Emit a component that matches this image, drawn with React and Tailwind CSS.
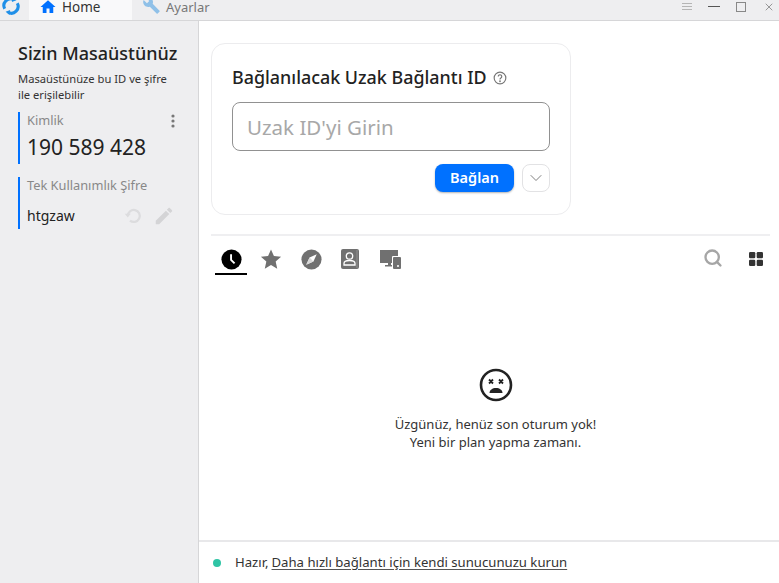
import { X, ChevronDown, Search } from "lucide-react";

function Logo() {
  return (
    <svg width="18" height="18" viewBox="0 0 20 20" fill="none">
      <path d="M3 13A7.500 7.500 0 0 1 13 2.800" stroke="#1f8fe8" strokeWidth="3.400" />
      <path d="M17 7A7.500 7.500 0 0 1 7 17.200" stroke="#1f8fe8" strokeWidth="3.400" />
      <path d="M11.500 0l4.500 3.600-5 1.900z" fill="#1f8fe8" />
      <path d="M8.500 20L4 16.400l5-1.900z" fill="#1f8fe8" />
    </svg>
  );
}

function Wrench() {
  return (
    <svg width="18" height="18" viewBox="0 0 24 24" fill="#8fc0e8">
      <path d="M22 19.200l-9.100-9.100c.9-2.300.4-5-1.500-6.900C9.400 1.200 6.400.8 4 1.900l4.300 4.300-3 3L.9 5C-.3 7.400.2 10.400 2.200 12.400c1.900 1.900 4.600 2.400 6.900 1.500l9.100 9.100c.4.400 1 .4 1.400 0l2.300-2.300c.5-.4.500-1.100.1-1.500z" transform="translate(0 -1)" />
    </svg>
  );
}

function TitleBar() {
  return (
    <div className="flex h-[21px] border-b border-[#d6d6d8] bg-[#eeeef0]">
      <div className="w-[29px] overflow-hidden pl-[2px]">
        <div className="-mt-[3px]"><Logo /></div>
      </div>
      <div className="flex w-[103px] items-start bg-[#f9f9fa] pl-[10px]">
        <div className="-mt-[2px]">
          <svg width="18" height="18" viewBox="0 0 24 24" fill="#0071ff">
            <path d="M10 20v-6h4v6h5v-8h3L12 3 2 12h3v8z" />
          </svg>
        </div>
        <span className="ml-[5px] text-[13.500px] leading-[14px] text-[#333]">Home</span>
      </div>
      <div className="flex items-start pl-[11px]">
        <div className="-mt-[3px]"><Wrench /></div>
        <span className="ml-[5px] text-[13px] leading-[14px] text-[#777]">Ayarlar</span>
      </div>
      <div className="ml-auto flex items-center pb-[7px] pr-[4px]">
        <svg width="10" height="9" viewBox="0 0 10 9" stroke="#b5b5b5" strokeWidth="1">
          <path d="M0 1.500h10M0 4.500h10M0 7.500h10" />
        </svg>
        <div className="ml-[16px] h-[1px] w-[12px] bg-[#555]" />
        <div className="ml-[16px] h-[10px] w-[10px] border border-[#888]" />
        <X size={12} className="ml-[17px]" strokeWidth={1.3} color="#666" />
      </div>
    </div>
  );
}

function Sidebar() {
  return (
    <div className="w-[199px] shrink-0 border-r border-[#d6d6d8] bg-[#eeeef0] pl-[18px] pr-[25px] pt-[20px]">
      <div className="whitespace-nowrap text-[18px] font-medium leading-[24px] text-[#222]">Sizin Masaüstünüz</div>
      <div className="mt-[6px] whitespace-nowrap text-[11.200px] leading-[16px] text-[#333]">
        Masaüstünüze bu ID ve şifre<br />ile erişilebilir
      </div>
      <div className="mt-[9px] h-[52px] border-l-2 border-[#0071ff] pl-[7px]">
        <div className="flex items-center justify-between">
          <span className="text-[12.800px] leading-[17px] text-[#888]">Kimlik</span>
          <svg width="4" height="14" viewBox="0 0 4 14" fill="#777" className="-mr-[2px]">
            <circle cx="2" cy="2" r="1.600" /><circle cx="2" cy="7" r="1.600" /><circle cx="2" cy="12" r="1.600" />
          </svg>
        </div>
        <div className="mt-[5px] whitespace-nowrap text-[21px] leading-[26px] text-[#222]">190 589 428</div>
      </div>
      <div className="mt-[13px] h-[52px] border-l-2 border-[#0071ff] pl-[7px]">
        <div className="whitespace-nowrap text-[12.800px] leading-[17px] text-[#888]">Tek Kullanımlık Şifre</div>
        <div className="mt-[11px] flex items-center">
          <span className="text-[14px] leading-[22px] text-[#222]">htgzaw</span>
          <svg width="18" height="18" viewBox="0 0 24 24" fill="none" stroke="#dcdcde" strokeWidth="3" className="ml-auto mr-[11px]">
            <path d="M5 12a8 8 0 1 1 3 6.200" /><path d="M1 9h8L5 14z" fill="#dcdcde" stroke="none" />
          </svg>
          <svg width="22" height="22" viewBox="0 0 24 24" fill="#d4d4d6" className="-mr-[2px]">
            <path d="M3 17.250V21h3.750L17.800 9.940l-3.750-3.750L3 17.250zM20.700 7c.4-.4.4-1 0-1.400l-2.340-2.340c-.4-.4-1-.4-1.400 0l-1.830 1.830 3.750 3.750L20.700 7z" />
          </svg>
        </div>
      </div>
    </div>
  );
}

function ConnectCard() {
  return (
    <div className="h-[172px] w-[360px] rounded-[14px] border border-[#ececee] px-[20px] pt-[19px]">
      <div className="flex items-center">
        <span className="text-[17.900px] font-medium leading-[28px] text-[#222]">Bağlanılacak Uzak Bağlantı ID</span>
        <svg width="14" height="14" viewBox="0 0 24 24" fill="none" stroke="#777" strokeWidth="2" className="ml-[6px] mt-[1px]">
          <circle cx="12" cy="12" r="10" />
          <path d="M9 9.500a3 3 0 1 1 4.500 2.600c-1 .6-1.500 1.200-1.500 2.400" />
          <circle cx="12" cy="17.500" r=".6" />
        </svg>
      </div>
      <div className="mt-[11px] flex h-[49px] items-center rounded-[8px] border border-[#919191] pl-[14px] pt-[2px] text-[20.500px] text-[#a8a8a8]">
        Uzak ID'yi Girin
      </div>
      <div className="mt-[13px] flex items-center justify-end">
        <button className="h-[28px] w-[79px] rounded-[8px] bg-[#0071ff] text-[14.500px] font-semibold text-white shadow-[0_1px_2px_rgba(0,0,0,0.3)]">
          Bağlan
        </button>
        <div className="ml-[8px] flex h-[28px] w-[28px] items-center justify-center rounded-[8px] border border-[#e2e2e4]">
          <ChevronDown size={20} strokeWidth={1} color="#666" />
        </div>
      </div>
    </div>
  );
}

function PeerTabs() {
  return (
    <div className="mt-[19px] flex w-[559px] border-t-2 border-[#efeff1] pl-[4px]">
      <div className="flex h-[39px] w-[32px] items-center justify-center border-b-2 border-black pt-[9px]">
        <svg width="21" height="21" viewBox="0 0 24 24">
          <circle cx="12" cy="12" r="11.500" fill="#000" />
          <path d="M11.500 6v6.500l4 4" stroke="#fff" strokeWidth="2.200" fill="none" />
        </svg>
      </div>
      <div className="ml-[13px] flex h-[39px] w-[22px] items-center justify-center pt-[7px]">
        <svg width="22" height="22" viewBox="0 0 24 24" fill="#707070">
          <path d="M12 1.500l3.200 7.300 7.800.8-5.900 5.200 1.700 7.700L12 18.500l-6.800 4 1.700-7.700L1 9.600l7.800-.8z" />
        </svg>
      </div>
      <div className="ml-[18px] flex h-[39px] w-[22px] items-center justify-center pt-[7px]">
        <svg width="21" height="21" viewBox="0 0 24 24">
          <circle cx="12" cy="12" r="11.500" fill="#707070" />
          <path d="M18 6l-3.800 8.200L6 18l3.800-8.200z" fill="#fff" />
          <path d="M9.800 9.800l4.400 4.400L6 18z" fill="#d8d8d8" />
        </svg>
      </div>
      <div className="ml-[18px] flex h-[39px] w-[20px] items-center justify-center pt-[7px]">
        <svg width="18" height="20" viewBox="0 0 18 20">
          <rect x="0" y="0" width="18" height="20" rx="2" fill="#707070" />
          <circle cx="8.500" cy="7" r="3.200" fill="none" stroke="#fff" strokeWidth="1.300" />
          <path d="M3 16v-1.500c0-2 2.500-3 5.500-3s5.500 1 5.500 3V16z" fill="none" stroke="#fff" strokeWidth="1.300" />
          <path d="M16 1v18" stroke="#999" strokeWidth="0.800" />
        </svg>
      </div>
      <div className="ml-[19px] flex h-[39px] w-[22px] items-center justify-center pt-[7px]">
        <svg width="21" height="19" viewBox="0 0 21 19" fill="#707070">
          <path d="M0 0h18v13h-7v2h3v1.500H5V15h3v-2H0z" />
          <rect x="12" y="6" width="9" height="13" rx="1" fill="#fff" />
          <rect x="13" y="7" width="8" height="12" rx="1" />
          <circle cx="18" cy="16" r="1" fill="#fff" />
        </svg>
      </div>
      <div className="ml-auto flex h-[39px] items-center pr-[7px] pt-[7px]">
        <Search size={20} strokeWidth={2.8} color="#a6a6a6" className="-mt-[2px]" />
        <svg width="14" height="14" viewBox="0 0 14 14" fill="#333" className="ml-[26px]">
          <rect x="0" y="0" width="6.300" height="6.300" rx="1.200" />
          <rect x="7.700" y="0" width="6.300" height="6.300" rx="1.200" />
          <rect x="0" y="7.700" width="6.300" height="6.300" rx="1.200" />
          <rect x="7.700" y="7.700" width="6.300" height="6.300" rx="1.200" />
        </svg>
      </div>
    </div>
  );
}

function EmptyState() {
  return (
    <div className="flex flex-1 flex-col items-center pl-[1px] pt-[93px]">
      <svg width="34" height="34" viewBox="0 0 34 34" fill="none">
        <circle cx="17" cy="17" r="15" stroke="#222" strokeWidth="2.600" />
        <path d="M10 11.500l4 4M14 11.500l-4 4M20 11.500l4 4M24 11.500l-4 4" stroke="#222" strokeWidth="1.800" />
        <path d="M10.500 25c0-3 3-5 6.500-5s6.500 2 6.500 5z" fill="#222" />
      </svg>
      <div className="mt-[13px] text-center text-[13px] leading-[18px] text-[#333]">
        Üzgünüz, henüz son oturum yok!<br />Yeni bir plan yapma zamanı.
      </div>
    </div>
  );
}

export default function App() {
  return (
    <div className="flex h-[583px] w-[779px] flex-col overflow-hidden bg-white font-['Noto_Sans','Open_Sans',sans-serif]">
      <TitleBar />
      <div className="flex min-h-0 flex-1">
        <Sidebar />
        <div className="flex min-w-0 flex-1 flex-col">
          <div className="flex flex-1 flex-col pl-[12px] pt-[22px]">
            <ConnectCard />
            <PeerTabs />
            <EmptyState />
          </div>
          <div className="flex h-[43px] items-center border-t-2 border-[#e8e8ea] pl-[14px] text-[13.150px] text-[#333]">
            <span className="h-[8px] w-[8px] rounded-full bg-[#2fc4a5]" />
            <span className="ml-[14px]">Hazır,</span>
            <span className="ml-[3px] underline decoration-[#555] underline-offset-2">Daha hızlı bağlantı için kendi sunucunuzu kurun</span>
          </div>
        </div>
      </div>
    </div>
  );
}
